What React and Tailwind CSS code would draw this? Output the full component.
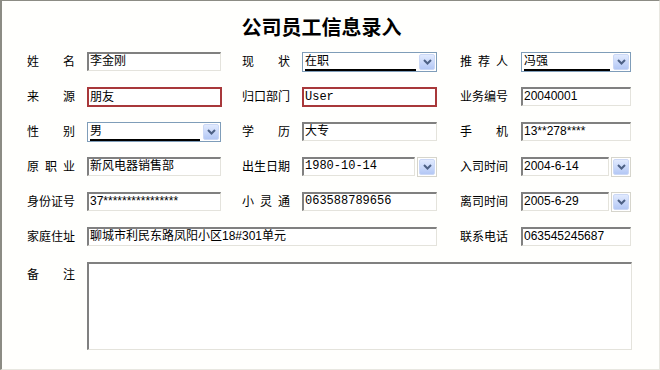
import React from 'react';

const inset =
  'h-[19px] bg-white border-t-2 border-l-2 border-r border-b border-t-[#808080] border-l-[#808080] border-r-[#e4e3dc] border-b-[#e4e3dc] px-[1px] text-[12px] leading-[15px] whitespace-nowrap overflow-hidden';
const redBox =
  'h-[20px] bg-white border-2 border-[#a8383a] px-[1px] text-[12px] leading-[16px] whitespace-nowrap overflow-hidden';
const mono = "font-['Liberation_Mono','Noto_Sans_CJK_SC',monospace] text-[10.5px]";

function Label({ chars, className = '' }) {
  return (
    <div className={`flex w-[48px] shrink-0 justify-between text-[12px] leading-[20px] ${className}`}>
      {chars.map((c, i) => <span key={i}>{c}</span>)}
    </div>
  );
}

function Arrow() {
  return (
    <div className="flex h-[16px] w-[16px] shrink-0 items-center justify-center rounded-[2px] border border-[#cbd8f6] bg-gradient-to-b from-[#e1eafe] to-[#b4c8f5]">
      <svg width="9" height="6" viewBox="0 0 9 6">
        <polyline points="1,1 4.5,4.5 8,1" fill="none" stroke="#4d6185" strokeWidth="2" />
      </svg>
    </div>
  );
}

function Select({ value, w }) {
  return (
    <div className={`flex h-[20px] items-center border border-[#7f9db9] bg-white pl-[2px] pr-[1px] ${w}`}>
      <div className="mr-[3px] h-[17px] flex-1 border-b-2 border-black text-[12px] leading-[15px]">{value}</div>
      <Arrow />
    </div>
  );
}

function DateBox({ value, w, className = '' }) {
  return (
    <div className={`flex h-[20px] items-start ${w}`}>
      <div className={`${inset} flex-1 ${className}`}>{value}</div>
      <div className="ml-[2px] flex h-[20px] w-[20px] items-center justify-center border border-[#d6d5cc] bg-white">
        <Arrow />
      </div>
    </div>
  );
}

function Row({ children }) {
  return <div className="flex h-[20px] items-start">{children}</div>;
}

export default function App() {
  return (
    <div className="h-[370px] w-[660px] border-t border-l-2 border-r border-b border-t-[#8c8c84] border-l-[#8c8c84] border-r-[#e8e7e0] border-b-[#e8e7e0] bg-[#fffffd] font-['Liberation_Sans','Noto_Sans_CJK_SC',sans-serif] text-black">
      <div className="h-[51px] pt-[16px] pr-[18px] text-center text-[20px] font-bold leading-[22px]">公司员工信息录入</div>

      <div className="flex flex-col gap-[15px] pl-[25px]">
        <Row>
          <Label chars={['姓', '名']} />
          <div className={`${inset} ml-[12px] w-[134px]`}>李金刚</div>
          <Label chars={['现', '状']} className="ml-[21px]" />
          <Select value="在职" w="ml-[12px] w-[135px]" />
          <Label chars={['推', '荐', '人']} className="ml-[23px]" />
          <Select value="冯强" w="ml-[13px] w-[110px]" />
        </Row>

        <Row>
          <Label chars={['来', '源']} />
          <div className={`${redBox} ml-[12px] w-[135px]`}>朋友</div>
          <Label chars={['归口部门']} className="ml-[20px]" />
          <div className={`${redBox} ml-[12px] w-[135px] ${mono}`}>User</div>
          <Label chars={['业务编号']} className="ml-[23px]" />
          <div className={`${inset} ml-[13px] w-[110px] text-[11.5px]`}>20040001</div>
        </Row>

        <Row>
          <Label chars={['性', '别']} />
          <Select value="男" w="ml-[12px] w-[134px]" />
          <Label chars={['学', '历']} className="ml-[21px]" />
          <div className={`${inset} ml-[12px] w-[135px]`}>大专</div>
          <Label chars={['手', '机']} className="ml-[23px]" />
          <div className={`${inset} ml-[13px] w-[110px] text-[11.5px]`}>13**278****</div>
        </Row>

        <Row>
          <Label chars={['原', '职', '业']} />
          <div className={`${inset} ml-[12px] w-[134px]`}>新风电器销售部</div>
          <Label chars={['出生日期']} className="ml-[21px]" />
          <DateBox value="1980-10-14" w="ml-[12px] w-[135px]" className={mono} />
          <Label chars={['入司时间']} className="ml-[23px]" />
          <DateBox value="2004-6-14" w="ml-[13px] w-[110px]" className="text-[11.5px]" />
        </Row>

        <Row>
          <Label chars={['身份证号']} />
          <div className={`${inset} ml-[12px] w-[134px] text-[11.5px]`}>37****************</div>
          <Label chars={['小', '灵', '通']} className="ml-[21px]" />
          <div className={`${inset} ml-[12px] w-[135px] ${mono}`}>063588789656</div>
          <Label chars={['离司时间']} className="ml-[23px]" />
          <DateBox value="2005-6-29" w="ml-[13px] w-[110px]" className="text-[11.5px]" />
        </Row>

        <Row>
          <Label chars={['家庭住址']} />
          <div className={`${inset} ml-[12px] w-[350px]`}>聊城市利民东路凤阳小区18#301单元</div>
          <Label chars={['联系电话']} className="ml-[23px]" />
          <div className={`${inset} ml-[13px] w-[110px] text-[11.5px]`}>063545245687</div>
        </Row>

        <div className="flex items-start">
          <Label chars={['备', '注']} className="mt-[3px]" />
          <div className="ml-[12px] h-[88px] w-[545px] border-t-2 border-l-2 border-r border-b border-t-[#808080] border-l-[#808080] border-r-[#e4e3dc] border-b-[#e4e3dc] bg-white" />
        </div>
      </div>
    </div>
  );
}
